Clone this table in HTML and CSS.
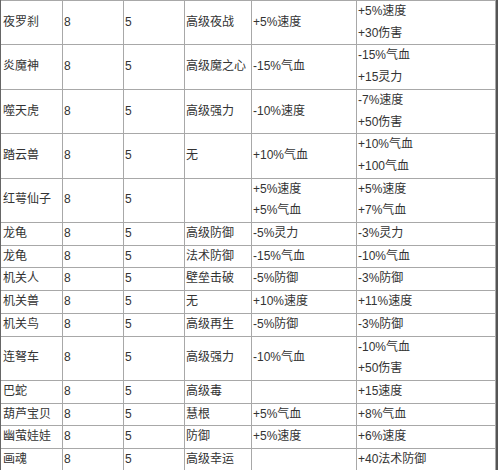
FILE: index.html
```html
<!DOCTYPE html>
<html lang="zh">
<head>
<meta charset="utf-8">
<title>宠物表</title>
<link rel="stylesheet" href="styles.css">
</head>
<body>
<div class="frame">
<table class="pets">
<colgroup>
<col class="c1"><col class="c2"><col class="c3"><col class="c4"><col class="c5"><col class="c6">
</colgroup>
<tbody>
<tr><td>夜罗刹</td><td>8</td><td>5</td><td>高级夜战</td><td>+5%速度</td><td><div>+5%速度</div><div>+30伤害</div></td></tr>
<tr><td>炎魔神</td><td>8</td><td>5</td><td>高级魔之心</td><td>-15%气血</td><td><div>-15%气血</div><div>+15灵力</div></td></tr>
<tr><td>噬天虎</td><td>8</td><td>5</td><td>高级强力</td><td>-10%速度</td><td><div>-7%速度</div><div>+50伤害</div></td></tr>
<tr><td>踏云兽</td><td>8</td><td>5</td><td>无</td><td>+10%气血</td><td><div>+10%气血</div><div>+100气血</div></td></tr>
<tr><td>红萼仙子</td><td>8</td><td>5</td><td></td><td><div>+5%速度</div><div>+5%气血</div></td><td><div>+5%速度</div><div>+7%气血</div></td></tr>
<tr><td>龙龟</td><td>8</td><td>5</td><td>高级防御</td><td>-5%灵力</td><td>-3%灵力</td></tr>
<tr><td>龙龟</td><td>8</td><td>5</td><td>法术防御</td><td>-15%气血</td><td>-10%气血</td></tr>
<tr><td>机关人</td><td>8</td><td>5</td><td>壁垒击破</td><td>-5%防御</td><td>-3%防御</td></tr>
<tr><td>机关兽</td><td>8</td><td>5</td><td>无</td><td>+10%速度</td><td>+11%速度</td></tr>
<tr><td>机关鸟</td><td>8</td><td>5</td><td>高级再生</td><td>-5%防御</td><td>-3%防御</td></tr>
<tr><td>连弩车</td><td>8</td><td>5</td><td>高级强力</td><td>-10%气血</td><td><div>-10%气血</div><div>+50伤害</div></td></tr>
<tr><td>巴蛇</td><td>8</td><td>5</td><td>高级毒</td><td></td><td>+15速度</td></tr>
<tr><td>葫芦宝贝</td><td>8</td><td>5</td><td>慧根</td><td>+5%气血</td><td>+8%气血</td></tr>
<tr><td>幽萤娃娃</td><td>8</td><td>5</td><td>防御</td><td>+5%速度</td><td>+6%速度</td></tr>
<tr><td>画魂</td><td>8</td><td>5</td><td>高级幸运</td><td></td><td>+40法术防御</td></tr>
</tbody>
</table>
</div>
</body>
</html>
```
FILE: styles.css
```css
html, body {
  margin: 0;
  padding: 0;
  background: #ffffff;
}

.frame {
  width: 495px;
  border-left: 1px solid #666666;
  border-right: 2px solid #555555;
}

.pets {
  width: 495px;
  table-layout: fixed;
  border-spacing: 0;
  border-top: 1px solid #a8a8a8;
  font-family: "Liberation Sans", "Noto Sans CJK SC", sans-serif;
  font-size: 12px;
  color: #333333;
}

.c1 { width: 62px; }
.c2 { width: 61px; }
.c3 { width: 61px; }
.c4 { width: 67px; }
.c5 { width: 105px; }
.c6 { width: 139px; }

.pets td {
  box-sizing: border-box;
  padding: 0 0 0 1px;
  line-height: 21.7px;
  border-right: 1px solid #a8a8a8;
  border-bottom: 1px solid #a8a8a8;
  vertical-align: middle;
  white-space: nowrap;
  overflow: hidden;
}

.pets td:first-child {
  padding-left: 2px;
}
```
